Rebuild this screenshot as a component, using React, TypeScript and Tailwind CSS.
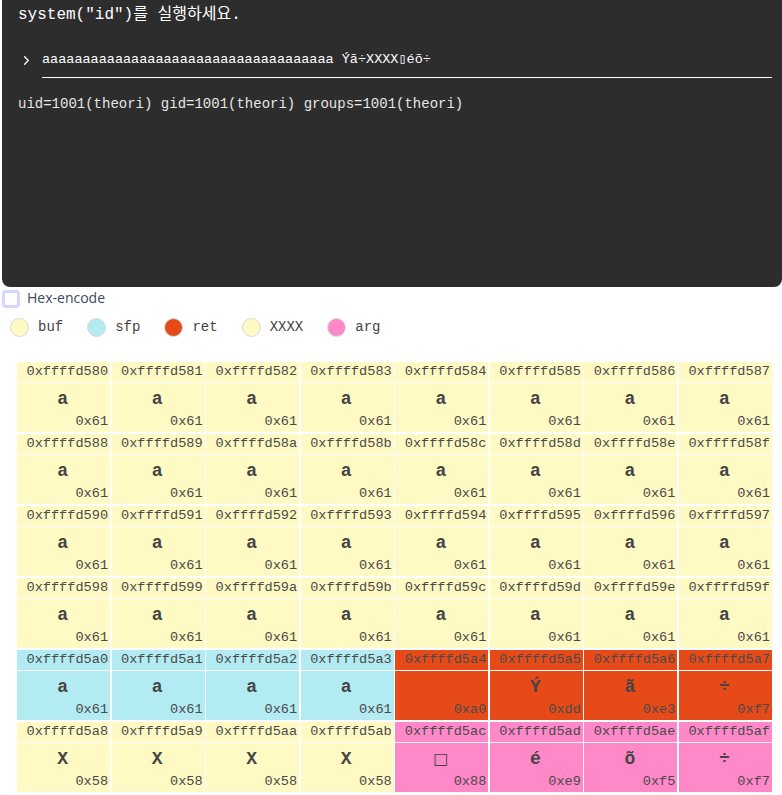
import { LuChevronRight } from "react-icons/lu";

type Kind = "buf" | "sfp" | "ret" | "xxxx" | "arg";

const kindColor: Record<Kind, string> = {
    buf: "bg-[#fff9c4]",
    sfp: "bg-[#b2ebf2]",
    ret: "bg-[#e64a19]",
    xxxx: "bg-[#fff9c4]",
    arg: "bg-[#ff88c8]",
};

const legend: { kind: Kind; label: string }[] = [
    { kind: "buf", label: "buf" },
    { kind: "sfp", label: "sfp" },
    { kind: "ret", label: "ret" },
    { kind: "xxxx", label: "XXXX" },
    { kind: "arg", label: "arg" },
];

const tail: { ch: string; code: number; kind: Kind }[] = [
    { ch: "\u00a0", code: 0xa0, kind: "ret" },
    { ch: "Ý", code: 0xdd, kind: "ret" },
    { ch: "ã", code: 0xe3, kind: "ret" },
    { ch: "÷", code: 0xf7, kind: "ret" },
    { ch: "X", code: 0x58, kind: "xxxx" },
    { ch: "X", code: 0x58, kind: "xxxx" },
    { ch: "X", code: 0x58, kind: "xxxx" },
    { ch: "X", code: 0x58, kind: "xxxx" },
    { ch: "□", code: 0x88, kind: "arg" },
    { ch: "é", code: 0xe9, kind: "arg" },
    { ch: "õ", code: 0xf5, kind: "arg" },
    { ch: "÷", code: 0xf7, kind: "arg" },
];

const bytes = [
    ...Array.from({ length: 36 }, (_, i) => ({
        ch: "a",
        code: 0x61,
        kind: (i < 32 ? "buf" : "sfp") as Kind,
    })),
    ...tail,
];

const rows = Array.from({ length: 6 }, (_, r) => bytes.slice(r * 8, r * 8 + 8));

const mono = "font-['Liberation_Mono','Noto_Sans_CJK_KR',monospace]";

export default function App() {
    return (
        <div className="min-h-screen bg-white">
            <div className="ml-[2px] h-[287px] rounded-b-lg bg-[#2d2d2d] pl-4 pr-[10px] pt-[4px] text-white">
                <div className={`${mono} text-[16px] leading-[22px]`}>
                    system("id")를 실행하세요.
                </div>
                <div className="mt-[24px] flex items-end">
                    <LuChevronRight className="mb-[10px] mr-[8px] ml-[1px] h-[15px] w-[15px] text-white" strokeWidth={2} />
                    <div
                        className={`${mono} flex-1 border-b border-white pb-[7px] text-[13.5px] leading-[20px]`}
                    >
                        aaaaaaaaaaaaaaaaaaaaaaaaaaaaaaaaaaaa Ýã÷XXXX▯éõ÷
                    </div>
                </div>
                <div className={`${mono} mt-[17px] text-[14px] leading-[18px] text-[#e6e6e6]`}>
                    uid=1001(theori) gid=1001(theori) groups=1001(theori)
                </div>
            </div>

            <label className="flex items-center">
                <span className="ml-[2px] mt-[2px] h-[18px] w-[18px] rounded-[4px] border-[3px] border-[#d3d7ff] bg-white" />
                <span className="ml-[7px] mt-[1px] font-['Open_Sans',sans-serif] text-[14px] leading-[20px] text-[#3b4a5e]">
                    Hex-encode
                </span>
            </label>

            <div className="mt-[9px] ml-[10px] flex items-center gap-x-[24px]">
                {legend.map((l) => (
                    <div key={l.label} className="flex items-center">
                        <span
                            className={`h-[19px] w-[19px] rounded-full border border-[#dadada] ${kindColor[l.kind]}`}
                        />
                        <span className={`${mono} ml-[9px] text-[14px] text-[#444]`}>
                            {l.label}
                        </span>
                    </div>
                ))}
            </div>

            <div className="ml-[17px] mr-[10px] mt-[24px] flex flex-col gap-y-[2px]">
                {rows.map((row, r) => (
                    <div key={r} className="flex flex-col gap-y-px">
                        <div className="grid grid-cols-8 gap-x-[1.5px]">
                            {row.map((b, i) => (
                                <div
                                    key={i}
                                    className={`${mono} ${kindColor[b.kind]} h-[20px] pr-[2px] text-right text-[13.6px] leading-[20px] text-[#4a4a4a]`}
                                >
                                    0xffffd5{(0x80 + r * 8 + i).toString(16)}
                                </div>
                            ))}
                        </div>
                        <div className="grid grid-cols-8 gap-x-[1.5px]">
                            {row.map((b, i) => (
                                <div
                                    key={i}
                                    className={`${mono} ${kindColor[b.kind]} flex h-[49px] flex-col pr-[2px]`}
                                >
                                    <div
                                        className={`mt-[5px] text-center leading-[22px] text-[#444] ${b.ch === "□" ? "font-['DejaVu_Sans',sans-serif] text-[16px] font-normal" : "text-[18px] font-bold"}`}
                                    >
                                        {b.ch}
                                    </div>
                                    <div className="mt-auto mb-[2px] text-right text-[13.6px] leading-[16px] text-[#4a4a4a]">
                                        0x{b.code.toString(16)}
                                    </div>
                                </div>
                            ))}
                        </div>
                    </div>
                ))}
            </div>
        </div>
    );
}
